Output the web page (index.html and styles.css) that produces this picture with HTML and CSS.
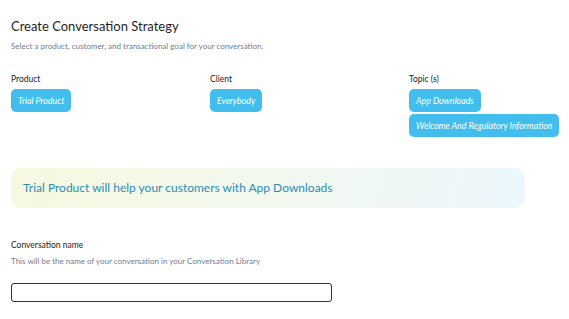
FILE: index.html
```html
<!DOCTYPE html>
<html lang="en">
<head>
  <meta charset="UTF-8">
  <title>Create Conversation Strategy</title>
  <link rel="stylesheet" href="styles.css">
</head>
<body>

<div class="page">
  <h1 class="title">Create Conversation Strategy</h1>
  <p class="hint">Select a product, customer, and transactional goal for your conversation.</p>

  <div class="pickers">
    <div class="picker">
      <p class="label">Product</p>
      <button class="chip">Trial Product</button>
    </div>
    <div class="picker">
      <p class="label">Client</p>
      <button class="chip">Everybody</button>
    </div>
    <div class="picker">
      <p class="label">Topic (s)</p>
      <button class="chip">App Downloads</button>
      <button class="chip">Welcome And Regulatory Information</button>
    </div>
  </div>

  <div class="summary">Trial Product will help your customers with App Downloads</div>

  <div class="field">
    <p class="label">Conversation name</p>
    <p class="hint">This will be the name of your conversation in your Conversation Library</p>
    <input class="name-input" type="text">
  </div>
</div>

</body>
</html>
```

FILE: styles.css
```css
body {
  margin: 0;
  font-family: "Lato", "Noto Sans", sans-serif;
  color: #222;
  background: white;
}

.page {
  padding: 17px 11px 0 11px;
}

.title {
  margin: 0;
  font-size: 13px;
  font-weight: 400;
  line-height: 19px;
  color: #1f1f1f;
}

.hint {
  margin: 5px 0 0 0;
  font-size: 8px;
  line-height: 11px;
  color: #6f7c93;
}

.pickers {
  display: grid;
  grid-template-columns: 199px 199px 1fr;
  margin-top: 22px;
}

.picker {
  display: flex;
  flex-direction: column;
  align-items: flex-start;
  gap: 2px;
}

.label {
  margin: 0 0 2px 0;
  font-size: 8.5px;
  line-height: 11px;
  color: #222;
}

.chip {
  height: 23px;
  padding: 0 7px;
  border: none;
  border-radius: 5px;
  background-color: #41bdee;
  color: white;
  font-family: "Lato", sans-serif;
  font-style: italic;
  font-size: 8.8px;
  white-space: nowrap;
  cursor: pointer;
}

.summary {
  width: 490px;
  margin-top: 31px;
  padding: 0 12px;
  height: 40px;
  line-height: 40px;
  border-radius: 10px;
  background: linear-gradient(100deg, #f6f8df 0%, #f2f8ee 50%, #ecf7fd 100%);
  color: #2b8db5;
  font-size: 12px;
}

.field {
  margin-top: 32px;
}

.field .hint {
  margin-top: 5px;
}

.name-input {
  display: block;
  width: 321px;
  height: 19px;
  margin-top: 16px;
  box-sizing: border-box;
  border: 1.5px solid #333;
  border-radius: 3px;
}
```
